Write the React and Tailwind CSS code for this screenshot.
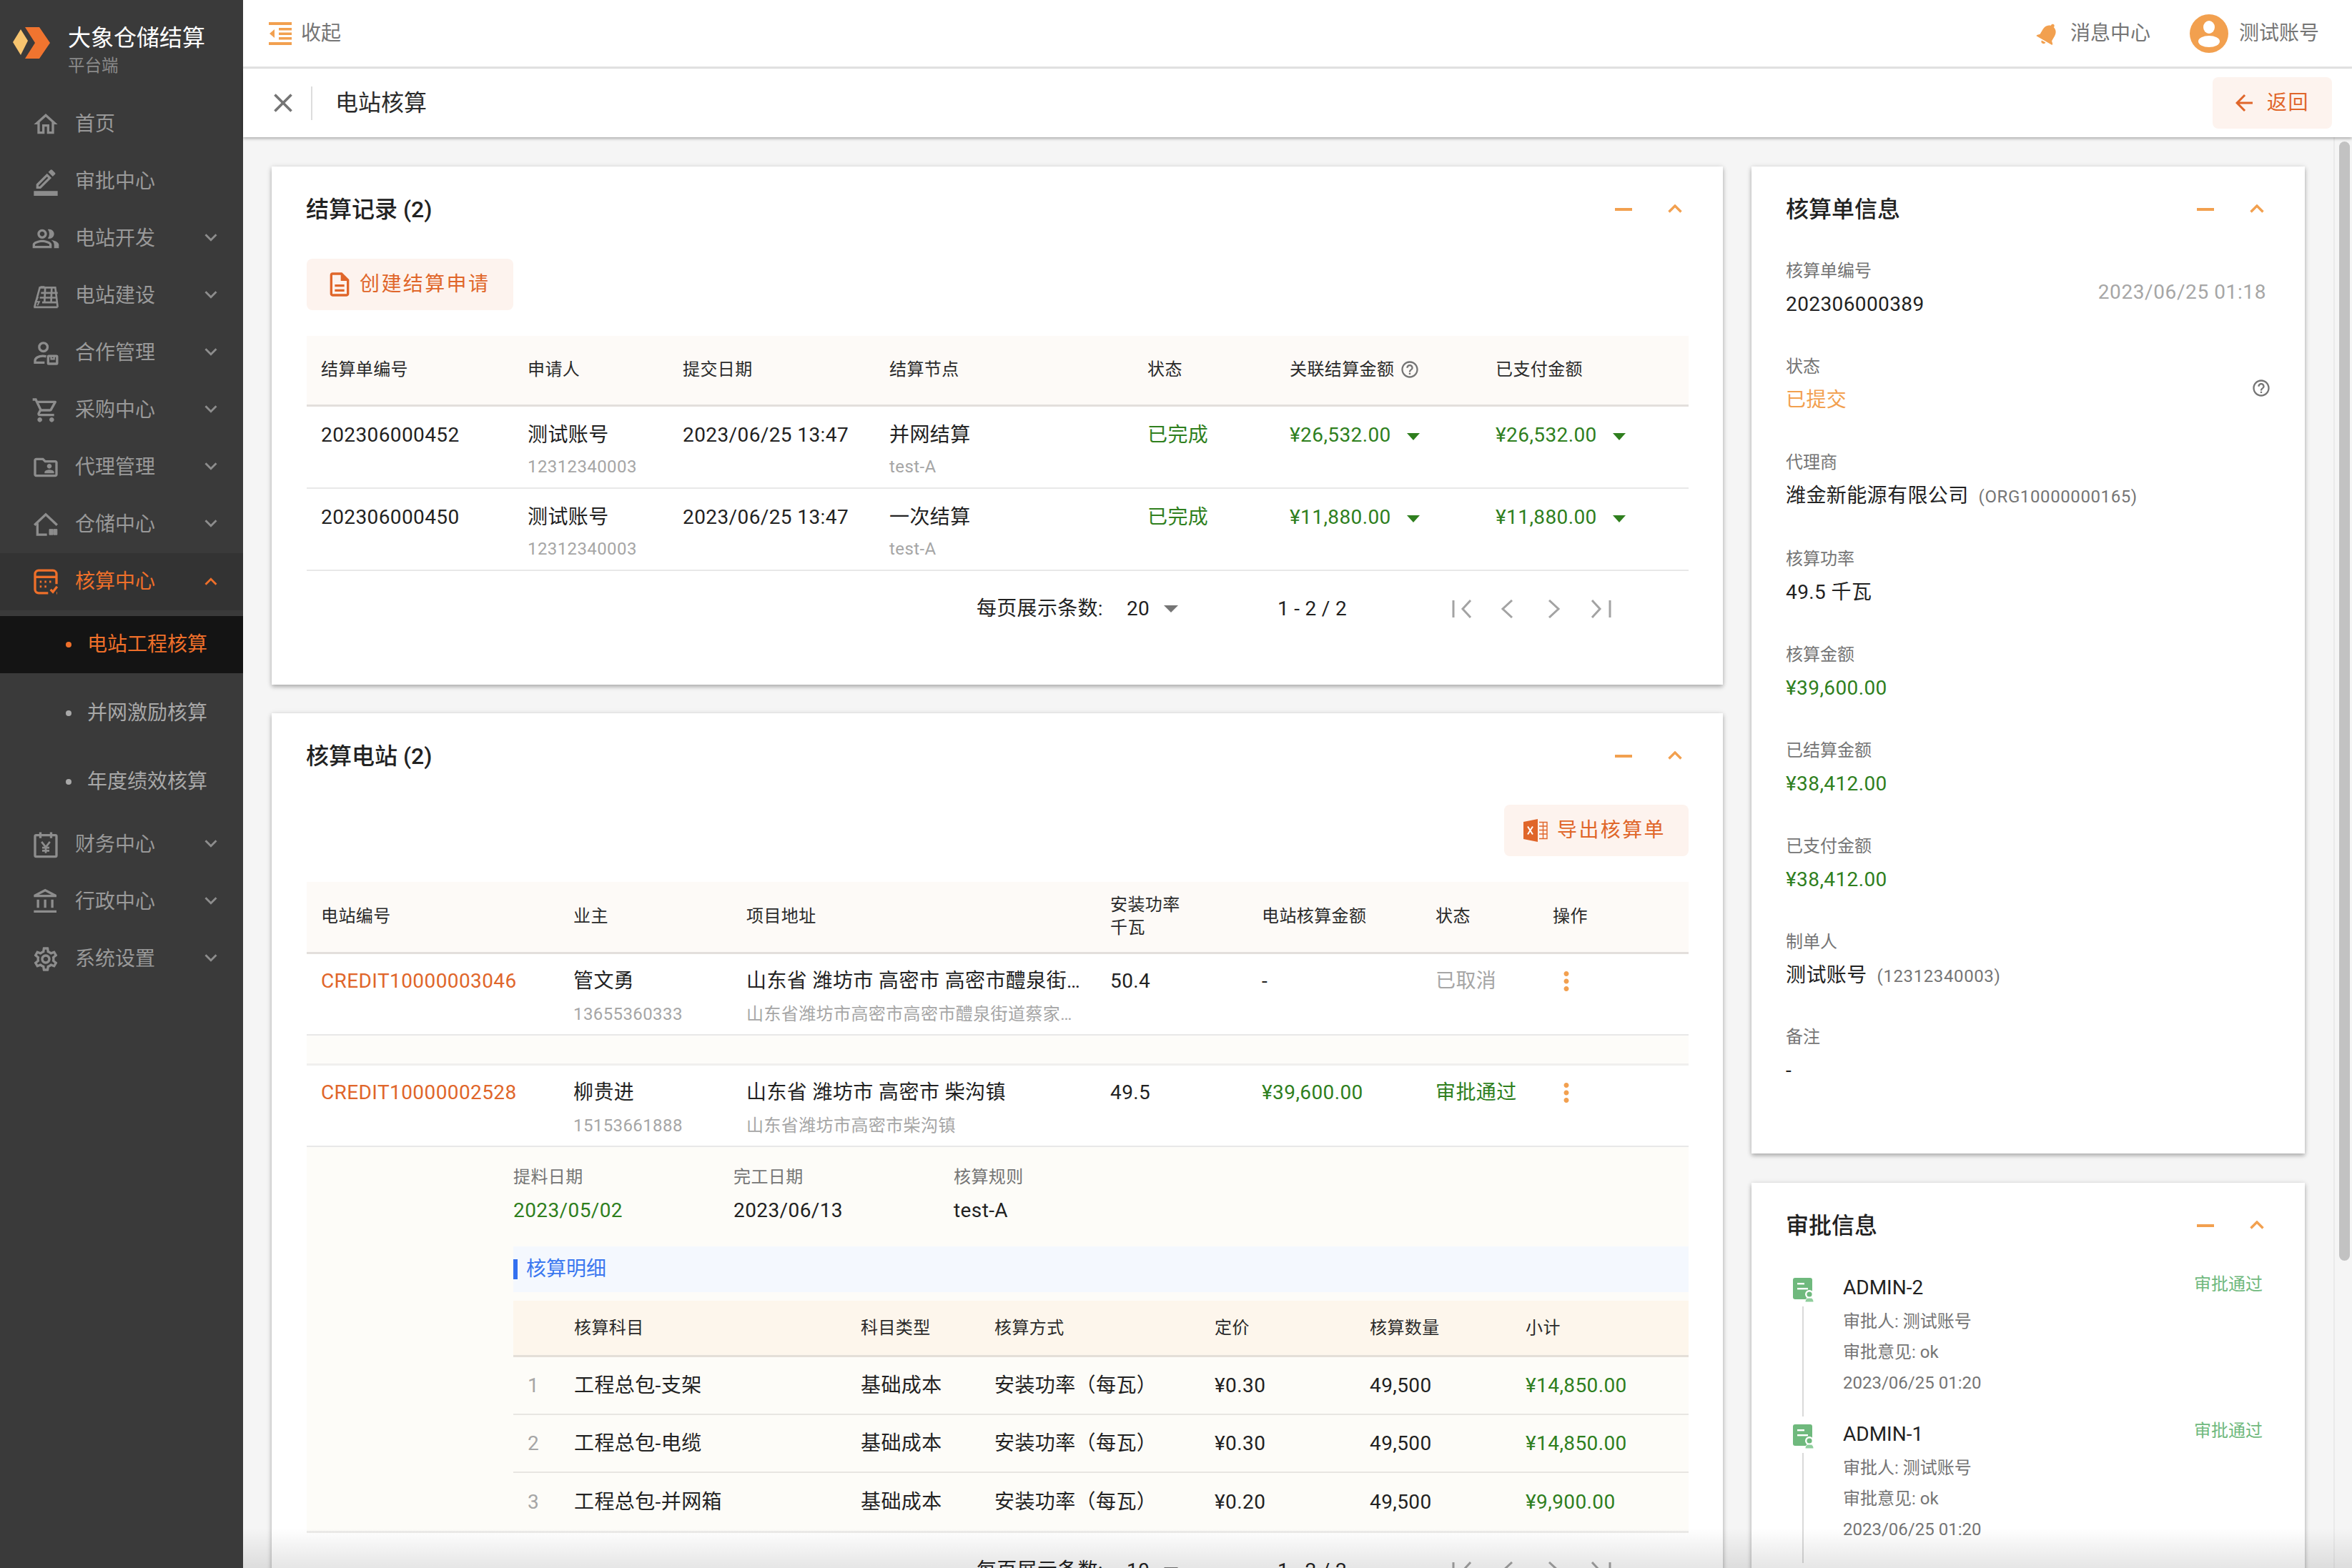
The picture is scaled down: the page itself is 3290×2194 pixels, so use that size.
import React from "react";
import {
  MdOutlineHome,
  MdOutlineBorderColor,
  MdOutlinePeopleAlt,
  MdOutlineShoppingCart,
  MdOutlineFolderShared,
  MdOutlineAccountBalance,
  MdOutlineSettings,
  MdKeyboardArrowDown,
  MdKeyboardArrowUp,
  MdClose,
  MdArrowBack,
  MdHelpOutline,
  MdMoreVert,
  MdNotifications,
  MdOutlineDescription,
} from "react-icons/md";

const SolarIcon = ({ size = 40 }) => (
  <svg width={size} height={size} viewBox="0 0 24 24" fill="none" stroke="currentColor" strokeWidth="1.6">
    <path d="M2 21.5h20M2.5 21.5L7 5h13l2 16.5" />
    <path d="M7.5 4.5L11 4.5M11.5 5L11 17M17 5L16.5 17.5M8 9.5h14M7 13.5h14.5M9 17.5h12.5" />
    <path d="M5.5 13l-2 4h3l-1.5 3" strokeWidth="1.2" />
  </svg>
);

const PartnerIcon = ({ size = 40 }) => (
  <svg width={size} height={size} viewBox="0 0 24 24" fill="none" stroke="currentColor" strokeWidth="2">
    <circle cx="10" cy="7" r="3.5" />
    <path d="M3 21v-2.5c0-2.5 3-4 6.5-4 1 0 2 .1 2.8.4M3 20h8" />
    <rect x="14" y="14.5" width="7.5" height="6.5" rx="0.5" />
    <path d="M16.5 14.5v2.5h2.5v-2.5" strokeWidth="1.4" />
  </svg>
);

const WarehouseIcon = ({ size = 40 }) => (
  <svg width={size} height={size} viewBox="0 0 24 24" fill="none" stroke="currentColor" strokeWidth="2">
    <path d="M2.5 12.5L12 3.5l9.5 9M5 11v9.5h8" />
    <path d="M15 16h3v4.5h-3zM18.5 20.5h3v-4.5h-3z" fill="currentColor" strokeWidth="0.6" />
  </svg>
);

const CalcIcon = ({ size = 40 }) => (
  <svg width={size} height={size} viewBox="0 0 24 24" fill="none" stroke="currentColor" strokeWidth="2">
    <path d="M14 21.5H6a3 3 0 0 1-3-3v-13a3 3 0 0 1 3-3h12a3 3 0 0 1 3 3V14" />
    <path d="M3 8h18" />
    <path d="M7 12h1.5M11 12h1.5M15 12h1.5M7 16h1.5M11 16h1.5" strokeWidth="1.8" />
    <path d="M16 18.5l2 2 3.5-4.5M21 21.5h.5" />
  </svg>
);

const FinanceIcon = ({ size = 40 }) => (
  <svg width={size} height={size} viewBox="0 0 24 24" fill="none" stroke="currentColor" strokeWidth="2">
    <rect x="3" y="4" width="18" height="18" rx="1" />
    <path d="M7.5 1.5v5M16.5 1.5v5" />
    <path d="M8.5 9.5L12 14l3.5-4.5M12 14v5M9 14.5h6M9 17h6" strokeWidth="1.6" />
  </svg>
);

const LogoIcon = () => (
  <svg width="52" height="46" viewBox="0 0 52 46">
    <path d="M11 3l10 16-10 20L0 21z" fill="#f7c46f" />
    <path d="M17 0h20l15 22-15 22H17l14-22z" fill="#f0742f" />
  </svg>
);

const CollapseIcon = () => (
  <svg width="32" height="32" viewBox="0 0 32 32" fill="#f2a04f">
    <rect x="0" y="0" width="32" height="4" />
    <rect x="0" y="28" width="32" height="4" />
    <rect x="14" y="8" width="18" height="3.5" />
    <rect x="14" y="14.5" width="18" height="3.5" />
    <rect x="14" y="21" width="18" height="3.5" />
    <path d="M8 10v12l-7-6z" />
  </svg>
);

const ExcelIcon = () => (
  <svg width="34" height="32" viewBox="0 0 34 32">
    <path d="M0 4L20 0v32L0 28z" fill="#e0662a" />
    <path d="M6 10.5l7 11M13 10.5l-7 11" stroke="#fff" strokeWidth="2" />
    <path d="M22 4.5h11v23H22M22 10h11M22 15.5h11M22 21h11M27.5 4.5v23" fill="none" stroke="#e0662a" strokeWidth="1.4" />
  </svg>
);

const AvatarIcon = () => (
  <svg width="54" height="54" viewBox="0 0 54 54">
    <circle cx="27" cy="27" r="27" fill="#f2a04f" />
    <ellipse cx="27" cy="18" rx="8" ry="9" fill="#fff" />
    <ellipse cx="27" cy="38" rx="15" ry="8" fill="#fff" />
  </svg>
);

const ApprovalIcon = () => (
  <svg width="30" height="34" viewBox="0 0 30 34">
    <rect x="0" y="0" width="27" height="30" rx="3" fill="#6fb97d" />
    <rect x="6" y="7" width="10" height="2.4" fill="#fff" />
    <rect x="6" y="14" width="15" height="2.4" fill="#fff" />
    <circle cx="23" cy="23" r="6" fill="#fff" />
    <circle cx="23" cy="23" r="3.6" fill="#6fb97d" />
    <path d="M17 34c0-5 3-6 6-6s6 1 6 6z" fill="#8fce9c" stroke="#fff" strokeWidth="1" />
  </svg>
);

const GreenCaret = () => (
  <svg width="18" height="10" viewBox="0 0 18 10" className="ml-[22px] mt-[4px] shrink-0">
    <path d="M0 0h18L9 10z" fill="#2f7f1e" />
  </svg>
);

const menuTop = [
  { label: "首页", icon: MdOutlineHome },
  { label: "审批中心", icon: MdOutlineBorderColor },
  { label: "电站开发", icon: MdOutlinePeopleAlt, arrow: true },
  { label: "电站建设", icon: SolarIcon, arrow: true },
  { label: "合作管理", icon: PartnerIcon, arrow: true },
  { label: "采购中心", icon: MdOutlineShoppingCart, arrow: true },
  { label: "代理管理", icon: MdOutlineFolderShared, arrow: true },
  { label: "仓储中心", icon: WarehouseIcon, arrow: true },
];

const menuBottom = [
  { label: "财务中心", icon: FinanceIcon, arrow: true },
  { label: "行政中心", icon: MdOutlineAccountBalance, arrow: true },
  { label: "系统设置", icon: MdOutlineSettings, arrow: true },
];

const MenuItem = ({ item }) => {
  const Icon = item.icon;
  return (
    <div className="h-[80px] flex items-center pl-[44px] pr-[28px] text-[#999999]">
      <span className="text-[#8d8d8d]">
        <Icon size={40} />
      </span>
      <span className="ml-[21px] text-[28px]">{item.label}</span>
      {item.arrow && <MdKeyboardArrowDown size={34} className="ml-auto -mt-[4px] text-[#8d8d8d]" />}
    </div>
  );
};

const Sidebar = () => (
  <aside className="w-[340px] shrink-0 bg-[#3a3a3a]">
    <div className="h-[134px] flex pl-[18px] pt-[38px]">
      <LogoIcon />
      <div className="ml-[25px] -mt-[2px]">
        <div className="text-[32px] leading-[34px] text-white">大象仓储结算</div>
        <div className="text-[23.5px] leading-[34px] mt-[5px] text-[#8a8a8a]">平台端</div>
      </div>
    </div>
    {menuTop.map((item) => (
      <MenuItem key={item.label} item={item} />
    ))}
    <div className="h-[80px] flex items-center pl-[44px] pr-[28px] bg-[#333333] text-[#ee6f2a]">
      <CalcIcon />
      <span className="ml-[21px] text-[28px]">核算中心</span>
      <MdKeyboardArrowUp size={34} className="ml-auto" />
    </div>
    <div className="py-[8px]">
      <div className="h-[80px] flex items-center pl-[92px] bg-[#141414] text-[#ee6f2a]">
        <span className="w-[8px] h-[8px] rounded-full bg-[#ee6f2a]"></span>
        <span className="ml-[22px] text-[28px]">电站工程核算</span>
      </div>
      <div className="h-[80px] mt-[16px] flex items-center pl-[92px] text-[#a8a8a8]">
        <span className="w-[8px] h-[8px] rounded-full bg-[#a8a8a8]"></span>
        <span className="ml-[22px] text-[28px]">并网激励核算</span>
      </div>
      <div className="h-[80px] mt-[16px] flex items-center pl-[92px] text-[#a8a8a8]">
        <span className="w-[8px] h-[8px] rounded-full bg-[#a8a8a8]"></span>
        <span className="ml-[22px] text-[28px]">年度绩效核算</span>
      </div>
    </div>
    {menuBottom.map((item) => (
      <MenuItem key={item.label} item={item} />
    ))}
  </aside>
);

const TopBar = () => (
  <div className="h-[96px] shrink-0 flex items-center border-b-[3px] border-[#e4e4e4] pl-[36px] pr-[46px] bg-white">
    <CollapseIcon />
    <span className="ml-[13px] text-[28px] text-[#757575]">收起</span>
    <div className="ml-auto flex items-center text-[28px] text-[#757575]">
      <MdNotifications size={38} className="rotate-[30deg] text-[#f2a04f]" />
      <span className="ml-[12px]">消息中心</span>
      <span className="ml-[55px]">
        <AvatarIcon />
      </span>
      <span className="ml-[15px]">测试账号</span>
    </div>
  </div>
);

const TitleBar = () => (
  <div className="h-[96px] shrink-0 flex items-center pl-[36px] pr-[28px] bg-white shadow-[0_2px_4px_rgba(0,0,0,0.3)] relative">
    <MdClose size={44} className="text-[#757575] -ml-[2px]" />
    <span className="ml-[17px] w-[2px] h-[47px] bg-[#dddddd]"></span>
    <span className="ml-[32px] text-[32px] text-[#2b2b2b]">电站核算</span>
    <button className="ml-auto h-[72px] w-[167px] pr-[6px] flex items-center justify-center rounded-[8px] bg-[#fdf3ee] text-[#e0662a] text-[28px] tracking-[1.5px]">
      <MdArrowBack size={36} className="mr-[14px]" />
      返回
    </button>
  </div>
);

const CardHead = ({ title }) => (
  <div className="h-[120px] flex items-center pl-[48px] pr-[57px]">
    <span className="text-[32px] font-medium text-[#222222]">{title}</span>
    <span className="ml-auto w-[24px] h-[4px] bg-[#f2a04f]"></span>
    <svg width="20" height="12" viewBox="0 0 20 12" className="ml-[50px] -mt-[2px]">
      <path d="M1.5 10.5L10 2l8.5 8.5" fill="none" stroke="#f2a04f" strokeWidth="3.4" />
    </svg>
  </div>
);

const Card = ({ children, className = "" }) => (
  <div className={`bg-white shadow-[0_3px_6px_rgba(0,0,0,0.28),0_0_8px_rgba(0,0,0,0.08)] ${className}`}>
    {children}
  </div>
);

const ActionButton = ({ icon, text, className = "" }) => (
  <button className={`h-[72px] flex items-center rounded-[8px] bg-[#fdf3ee] text-[#e0662a] text-[28px] tracking-[2.4px] ${className}`}>
    {icon}
    {text}
  </button>
);

const Pager = ({ size }) => (
  <div className="h-[106px] flex items-center pl-[937px] text-[28px] text-[#222222] tracking-[0.3px] whitespace-nowrap">
    <span className="w-[176px]">每页展示条数:</span>
    <span className="ml-[34px] w-[32px]">{size}</span>
    <svg width="20" height="10" viewBox="0 0 20 10" className="ml-[20px]">
      <path d="M0 0h20L10 10z" fill="#757575" />
    </svg>
    <span className="ml-[139px] w-[99px]">1 - 2 / 2</span>
    <svg width="224" height="26" viewBox="0 0 224 26" className="ml-[145px]" fill="none" stroke="#a3a3a3" strokeWidth="3">
      <path d="M2 1v24M26 1L15 13l11 12M84 1L71 13l13 12M136 1l13 12-13 12M196 1l11 12-11 12M221 1v24" />
    </svg>
  </div>
);

const Green = ({ children }) => <span className="text-[#2f7f1e]">{children}</span>;

const recordCols = "grid grid-cols-[289px_217px_289px_361px_199px_288px_1fr]";

const recordRows = [
  { no: "202306000452", node: "并网结算", amount: "¥26,532.00" },
  { no: "202306000450", node: "一次结算", amount: "¥11,880.00" },
];

const RecordCard = () => (
  <Card className="h-[725px]">
    <CardHead title="结算记录 (2)" />
    <div className="px-[49px] pr-[48px]">
      <ActionButton
        className="mt-[9px] w-[289px] pl-[26px]"
        icon={<MdOutlineDescription size={40} className="mr-[8px]" />}
        text="创建结算申请"
      />
      <div className={`${recordCols} mt-[36px] h-[99px] pb-[2px] items-center bg-[#fdfaf7] border-b-[3px] border-[#e3dfdc] text-[24px] text-[#2a2a2a] tracking-[0.4px]`}>
        <div className="pl-[20px]">结算单编号</div>
        <div className="pl-[20px]">申请人</div>
        <div className="pl-[20px]">提交日期</div>
        <div className="pl-[20px]">结算节点</div>
        <div className="pl-[20px]">状态</div>
        <div className="pl-[20px] flex items-center">
          关联结算金额
          <MdHelpOutline size={28} className="ml-[8px] text-[#757575]" />
        </div>
        <div className="pl-[20px]">已支付金额</div>
      </div>
      {recordRows.map((r) => (
        <div key={r.no} className={`${recordCols} h-[115px] border-b-2 border-[#e8e8e8] text-[28px] text-[#222222] tracking-[0.4px]`}>
          <div className="pl-[20px] pt-[20px] leading-[40px]">{r.no}</div>
          <div className="pl-[20px] pt-[20px]">
            <div className="leading-[40px]">测试账号</div>
            <div className="leading-[36px] mt-[6px] text-[24px] text-[#a6a6a6]">12312340003</div>
          </div>
          <div className="pl-[20px] pt-[20px] leading-[40px]">2023/06/25 13:47</div>
          <div className="pl-[20px] pt-[20px]">
            <div className="leading-[40px]">{r.node}</div>
            <div className="leading-[36px] mt-[6px] text-[24px] text-[#a6a6a6]">test-A</div>
          </div>
          <div className="pl-[20px] pt-[20px] leading-[40px]">
            <Green>已完成</Green>
          </div>
          <div className="pl-[20px] pt-[20px] leading-[40px] flex items-center h-[60px]">
            <Green>{r.amount}</Green>
            <GreenCaret />
          </div>
          <div className="pl-[20px] pt-[20px] leading-[40px] flex items-center h-[60px]">
            <Green>{r.amount}</Green>
            <GreenCaret />
          </div>
        </div>
      ))}
      <Pager size="20" />
    </div>
  </Card>
);

const stationCols = "grid grid-cols-[353px_242px_509px_212px_243px_164px_1fr]";

const StationRow = ({ code, owner, phone, address, subAddress, power, amount, status, statusClass }) => (
  <div className={`${stationCols} h-[114px] border-b-2 border-[#e8e8e8] text-[28px] text-[#222222] tracking-[0.4px]`}>
    <div className="pl-[20px] pt-[18px] leading-[40px] text-[#e0662a]">{code}</div>
    <div className="pl-[20px] pt-[18px]">
      <div className="leading-[40px]">{owner}</div>
      <div className="leading-[36px] mt-[8px] text-[24px] text-[#a6a6a6]">{phone}</div>
    </div>
    <div className="pl-[20px] pt-[18px] pr-[10px] min-w-0">
      <div className="leading-[40px] truncate">{address}</div>
      <div className="leading-[36px] mt-[8px] text-[24px] text-[#a6a6a6] truncate pr-[8px]">{subAddress}</div>
    </div>
    <div className="pl-[20px] pt-[18px] leading-[40px]">{power}</div>
    <div className="pl-[20px] pt-[18px] leading-[40px]">{amount}</div>
    <div className={`pl-[20px] pt-[18px] leading-[40px] ${statusClass}`}>{status}</div>
    <div className="pl-[18px] pt-[17px]">
      <MdMoreVert size={42} className="text-[#f2a04f]" />
    </div>
  </div>
);

const detailCols = "grid grid-cols-[65px_401px_187px_308px_217px_218px_1fr]";

const detailRows = [
  { no: 1, name: "工程总包-支架", price: "¥0.30", total: "¥14,850.00" },
  { no: 2, name: "工程总包-电缆", price: "¥0.30", total: "¥14,850.00" },
  { no: 3, name: "工程总包-并网箱", price: "¥0.20", total: "¥9,900.00" },
];

const StationCard = () => (
  <Card className="mt-[40px]">
    <CardHead title="核算电站 (2)" />
    <div className="px-[49px] pr-[48px]">
      <div className="flex justify-end">
        <ActionButton
          className="mt-[8px] w-[258px] pl-[27px]"
          icon={<span className="mr-[13px]"><ExcelIcon /></span>}
          text="导出核算单"
        />
      </div>
      <div className={`${stationCols} mt-[36px] h-[101px] pb-[2px] items-center bg-[#fdfaf7] border-b-[3px] border-[#e3dfdc] text-[24px] leading-[32px] text-[#2a2a2a] tracking-[0.4px]`}>
        <div className="pl-[20px]">电站编号</div>
        <div className="pl-[20px]">业主</div>
        <div className="pl-[20px]">项目地址</div>
        <div className="pl-[20px]">
          安装功率
          <br />
          千瓦
        </div>
        <div className="pl-[20px]">电站核算金额</div>
        <div className="pl-[20px]">状态</div>
        <div className="pl-[20px]">操作</div>
      </div>
      <StationRow
        code="CREDIT10000003046"
        owner="管文勇"
        phone="13655360333"
        address="山东省 潍坊市 高密市 高密市醴泉街道蔡家庄村"
        subAddress="山东省潍坊市高密市高密市醴泉街道蔡家庄村委会"
        power="50.4"
        amount="-"
        status="已取消"
        statusClass="text-[#a6a6a6]"
      />
      <div className="h-[42px] bg-[#fdfcf9] border-b-[3px] border-[#f0efee]"></div>
      <StationRow
        code="CREDIT10000002528"
        owner="柳贵进"
        phone="15153661888"
        address="山东省 潍坊市 高密市 柴沟镇"
        subAddress="山东省潍坊市高密市柴沟镇"
        power="49.5"
        amount={<Green>¥39,600.00</Green>}
        status="审批通过"
        statusClass="text-[#2f7f1e]"
      />
      <div className="bg-[#fdfcf8] pl-[289px] pt-[24px] border-b-[3px] border-[#ecebe9]">
        <div className="grid grid-cols-[308px_308px_1fr] tracking-[0.4px]">
          <div>
            <div className="text-[24px] leading-[36px] text-[#757575]">提料日期</div>
            <div className="text-[28px] leading-[40px] mt-[9px] text-[#2f7f1e]">2023/05/02</div>
          </div>
          <div>
            <div className="text-[24px] leading-[36px] text-[#757575]">完工日期</div>
            <div className="text-[28px] leading-[40px] mt-[9px] text-[#222222]">2023/06/13</div>
          </div>
          <div>
            <div className="text-[24px] leading-[36px] text-[#757575]">核算规则</div>
            <div className="text-[28px] leading-[40px] mt-[9px] text-[#222222]">test-A</div>
          </div>
        </div>
        <div className="mt-[30px] h-[64px] flex items-center bg-[#f4f8fe]">
          <span className="w-[6px] h-[28px] bg-[#3370f0]"></span>
          <span className="ml-[12px] text-[28px] text-[#3b78f0]">核算明细</span>
        </div>
        <div className={`${detailCols} mt-[12px] h-[79px] items-center bg-[#fdf6ec] border-b-[3px] border-[#e4dfd8] text-[24px] text-[#2a2a2a] tracking-[0.4px]`}>
          <div></div>
          <div className="pl-[20px]">核算科目</div>
          <div className="pl-[20px]">科目类型</div>
          <div className="pl-[20px]">核算方式</div>
          <div className="pl-[20px]">定价</div>
          <div className="pl-[20px]">核算数量</div>
          <div className="pl-[20px]">小计</div>
        </div>
        {detailRows.map((r, i) => (
          <div
            key={r.no}
            className={`${detailCols} h-[81px] items-center text-[28px] text-[#222222] tracking-[0.4px] ${i < 2 ? "border-b-2 border-[#e8e6e2]" : ""}`}
          >
            <div className="pl-[20px] text-[#a6a6a6]">{r.no}</div>
            <div className="pl-[20px]">{r.name}</div>
            <div className="pl-[20px]">基础成本</div>
            <div className="pl-[20px]">安装功率（每瓦）</div>
            <div className="pl-[20px]">{r.price}</div>
            <div className="pl-[20px]">49,500</div>
            <div className="pl-[20px] text-[#2f7f1e]">{r.total}</div>
          </div>
        ))}
      </div>
      <Pager size="10" />
    </div>
  </Card>
);

const Field = ({ label, children }) => (
  <div>
    <div className="text-[24px] leading-[36px] text-[#757575]">{label}</div>
    <div className="text-[28px] leading-[40px] mt-[9px] text-[#222222] tracking-[0.4px]">{children}</div>
  </div>
);

const InfoCard = () => (
  <Card>
    <CardHead title="核算单信息" />
    <div className="pl-[48px] pr-[54px] pt-[8px] pb-[96px] flex flex-col gap-[49px]">
      <div className="flex justify-between">
        <Field label="核算单编号">202306000389</Field>
        <span className="mt-[28px] text-[28px] leading-[40px] text-[#a6a6a6] tracking-[0.6px]">2023/06/25 01:18</span>
      </div>
      <div className="flex justify-between">
        <Field label="状态">
          <span className="text-[#f2a04f]">已提交</span>
        </Field>
        <MdHelpOutline size={28} className="mt-[34px] -mr-[7px] text-[#757575]" />
      </div>
      <Field label="代理商">
        潍金新能源有限公司
        <span className="ml-[14px] text-[24px] text-[#757575] tracking-[0.6px]">(ORG10000000165)</span>
      </Field>
      <Field label="核算功率">49.5 千瓦</Field>
      <Field label="核算金额">
        <Green>¥39,600.00</Green>
      </Field>
      <Field label="已结算金额">
        <Green>¥38,412.00</Green>
      </Field>
      <Field label="已支付金额">
        <Green>¥38,412.00</Green>
      </Field>
      <Field label="制单人">
        测试账号
        <span className="ml-[14px] text-[24px] text-[#757575] tracking-[0.6px]">(12312340003)</span>
      </Field>
      <div className="-mt-[2px]">
        <Field label="备注">-</Field>
      </div>
    </div>
  </Card>
);

const ApprovalItem = ({ name }) => (
  <div className="flex h-[205px]">
    <div className="w-[79px] flex flex-col items-start pl-[9px]">
      <ApprovalIcon />
      <span className="ml-[13px] mt-[6px] w-[2px] h-[154px] bg-[#d9d9d9]"></span>
    </div>
    <div className="flex-1 -mt-[4px]">
      <div className="flex justify-between">
        <span className="text-[28px] leading-[36px] text-[#222222]">{name}</span>
        <span className="text-[24px] leading-[26px] text-[#6fb97d]">审批通过</span>
      </div>
      <div className="mt-[8px] text-[24px] leading-[43px] text-[#757575]">
        <div>审批人: 测试账号</div>
        <div>审批意见: ok</div>
        <div>2023/06/25 01:20</div>
      </div>
    </div>
  </div>
);

const ApprovalCard = () => (
  <Card className="mt-[41px]">
    <CardHead title="审批信息" />
    <div className="pl-[49px] pr-[59px] pt-[13px]">
      <ApprovalItem name="ADMIN-2" />
      <ApprovalItem name="ADMIN-1" />
    </div>
  </Card>
);

const App = () => {
  return (
    <div className="w-[3290px] h-[2194px] overflow-hidden flex relative bg-[#f5f5f5] [font-family:Roboto,'Noto_Sans_CJK_SC',sans-serif]">
      <Sidebar />
      <div className="flex-1 min-w-0 flex flex-col">
        <TopBar />
        <TitleBar />
        <div className="flex-1 min-h-0 flex overflow-hidden">
          <div className="w-[2030px] ml-[40px] pt-[41px] shrink-0">
            <RecordCard />
            <StationCard />
          </div>
          <div className="w-[774px] ml-[40px] pt-[41px] shrink-0">
            <InfoCard />
            <ApprovalCard />
          </div>
          <div className="ml-auto w-[26px] border-l-2 border-[#eaeaea] pl-[6px] pt-[6px]">
            <div className="w-[15px] h-[1566px] rounded-full bg-[#c2c2c2]"></div>
          </div>
        </div>
      </div>
      <div className="absolute left-[340px] right-0 bottom-0 h-[56px] bg-gradient-to-b from-transparent to-black/10"></div>
    </div>
  );
};

export default App;
